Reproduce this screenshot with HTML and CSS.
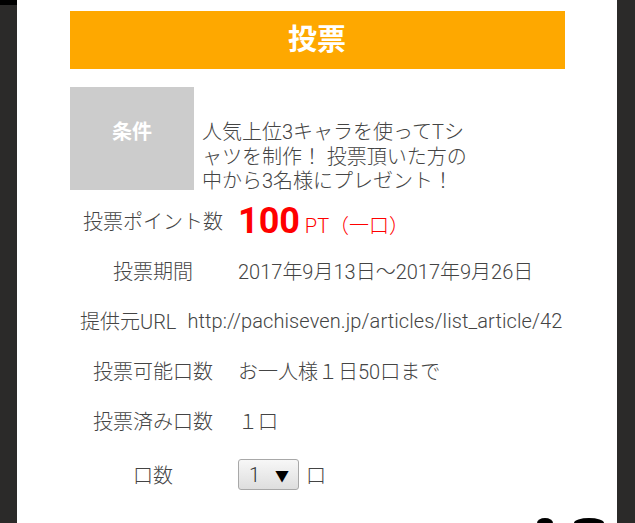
FILE: index.html
```html
<!DOCTYPE html>
<html lang="ja">
<head>
    <meta charset="UTF-8">
    <title>投票</title>
    <link rel="stylesheet" href="styles.css">
</head>
<body>
    <div class="tab"></div>
    <div class="panel">
        <h2 class="title">投票</h2>

        <div class="cond">
            <div class="cond-label">条件</div>
            <p class="cond-text">人気上位3キャラを使ってTシャツを制作！ 投票頂いた方の中から3名様にプレゼント！</p>
        </div>

        <div class="row">
            <span class="label">投票ポイント数</span>
            <span class="value points"><b>100</b> PT（一口）</span>
        </div>
        <div class="row">
            <span class="label">投票期間</span>
            <span class="value">2017年9月13日〜2017年9月26日</span>
        </div>
        <div class="row row-url">
            <span class="label">提供元URL</span>
            <span class="value">http://pachiseven.jp/articles/list_article/42</span>
        </div>
        <div class="row">
            <span class="label">投票可能口数</span>
            <span class="value">お一人様１日50口まで</span>
        </div>
        <div class="row">
            <span class="label">投票済み口数</span>
            <span class="value">１口</span>
        </div>
        <div class="row row-qty">
            <span class="label">口数</span>
            <span class="value">
                <span class="select-wrap">
                    <select class="qty" name="qty">
                        <option>1</option>
                        <option>2</option>
                        <option>3</option>
                    </select>
                    <span class="arrow">▼</span>
                </span>
                口
            </span>
        </div>

        <svg class="mascot" width="70" height="10" viewBox="0 0 70 10">
            <ellipse cx="8" cy="10" rx="8" ry="5" fill="#000"/>
            <ellipse cx="52" cy="10" rx="15" ry="5" fill="#000"/>
        </svg>
    </div>
</body>
</html>
```

FILE: styles.css
```css
body {
    margin: 0;
    background-color: #2b2a29;
    font-family: "Roboto", "Noto Sans CJK JP", sans-serif;
    color: #444;
}
.tab {
    position: absolute;
    left: 0;
    top: 0;
    width: 78px;
    height: 5px;
    background-color: #000;
    border-bottom-right-radius: 5px;
}
.panel {
    position: relative;
    width: 600px;
    height: 523px;
    margin-left: 17px;
    padding-top: 11px;
    box-sizing: border-box;
    background-color: #fff;
    overflow: hidden;
}
.title {
    width: 495px;
    height: 58px;
    margin: 0 auto;
    background-color: #fea800;
    color: #fff;
    font-size: 29px;
    font-weight: bold;
    line-height: 58px;
    text-align: center;
}
.cond {
    display: flex;
    margin-top: 18px;
    padding-left: 53px;
}
.cond-label {
    width: 124px;
    height: 103px;
    padding-top: 32px;
    box-sizing: border-box;
    background-color: #ccc;
    color: #fff;
    font-size: 20px;
    font-weight: bold;
    line-height: 26px;
    text-align: center;
}
.cond-text {
    width: 272px;
    margin: 33px 0 0 8px;
    font-size: 20px;
    font-weight: 300;
    line-height: 24.5px;
}
.row {
    display: flex;
    align-items: center;
    height: 50px;
    padding-left: 63px;
    font-size: 20px;
    font-weight: 300;
}
.cond + .row {
    margin-top: 2px;
}
.label {
    width: 146px;
    text-align: center;
    white-space: nowrap;
}
.value {
    margin-left: 12px;
    white-space: nowrap;
}
.row-url .label {
    width: auto;
}
.row-url .value {
    margin-left: 11px;
    letter-spacing: 0.1px;
}
.points {
    color: #f00;
    font-size: 20px;
    font-weight: 300;
}
.points b {
    font-size: 36px;
    font-weight: bold;
}
.row-qty {
    height: 58px;
}
.row-qty .value {
    display: flex;
    align-items: center;
    gap: 7px;
}
.select-wrap {
    position: relative;
    display: inline-block;
}
.qty {
    appearance: none;
    -webkit-appearance: none;
    width: 61px;
    height: 31px;
    padding: 0 0 0 10px;
    border: 1px solid #a8a8a8;
    border-radius: 3px;
    background: linear-gradient(#f7f7f7, #dedede);
    color: #333;
    font-family: "Roboto", sans-serif;
    font-size: 20px;
    font-weight: 300;
}
.arrow {
    position: absolute;
    right: 10px;
    top: 6px;
    font-size: 14px;
    color: #000;
    pointer-events: none;
}
.mascot {
    position: absolute;
    left: 520px;
    bottom: 0;
}
```
